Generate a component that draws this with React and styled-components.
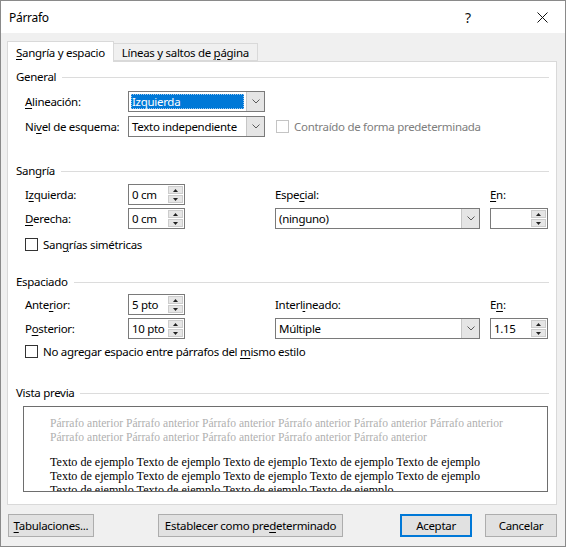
import React from 'react';
import styled, { createGlobalStyle } from 'styled-components';

const Global = createGlobalStyle`
  html, body { margin: 0; padding: 0; background: #fff; }
  body { font-family: "Noto Sans", "Segoe UI", sans-serif; font-size: 11.5px; letter-spacing: -0.3px; color: #000; }
  * { box-sizing: border-box; }
  u { text-decoration-thickness: 1px; text-underline-offset: 2px; }
`;

const Window = styled.div`
  width: 566px;
  height: 547px;
  border: 1px solid #8a8a8a;
  background: #f0f0f0;
  display: flex;
  flex-direction: column;
`;

const TitleBar = styled.div`
  height: 32px;
  background: #fff;
  display: flex;
  align-items: center;
  padding-left: 8px;
  flex-shrink: 0;
`;

const Title = styled.div`
  flex: 1;
  font-size: 12px;
`;

const TitleButton = styled.div`
  width: 46px;
  height: 32px;
  display: flex;
  align-items: center;
  justify-content: center;
  font-size: 14px;
  color: #111;
  margin-right: ${p => p.$mr || 0}px;
`;

const Body = styled.div`
  flex: 1;
  display: flex;
  flex-direction: column;
  padding: 8px 8px 0 6px;
`;

const Tabs = styled.div`
  display: flex;
  align-items: flex-end;
  height: 20px;
  position: relative;
  z-index: 1;
`;

const Tab = styled.div`
  height: ${p => (p.$active ? 21 : 18)}px;
  padding: 0 8px;
  display: flex;
  align-items: center;
  background: ${p => (p.$active ? '#fff' : '#f0f0f0')};
  border: 1px solid #d9d9d9;
  border-bottom: ${p => (p.$active ? 'none' : '1px solid #d9d9d9')};
  border-left: ${p => (p.$active ? '1px solid #d9d9d9' : 'none')};
  margin-bottom: ${p => (p.$active ? -1 : 0)}px;
`;

const Panel = styled.div`
  height: 444px;
  background: #fff;
  border: 1px solid #d9d9d9;
  padding: 7px 7px 0 8px;
  display: flex;
  flex-direction: column;
`;

const SectionHeader = styled.div`
  display: flex;
  align-items: center;
  height: 16px;
  line-height: 16px;
  margin-top: ${p => p.$mt || 0}px;
  &::after {
    content: '';
    flex: 1;
    border-top: 1px solid #dcdcdc;
    margin-left: 6px;
  }
`;

const SectionBody = styled.div`
  padding-left: 9px;
  margin-top: ${p => p.$mt || 0}px;
`;

const FlexRow = styled.div`
  display: flex;
  align-items: center;
  height: 21px;
  margin-top: ${p => p.$mt || 0}px;
`;

const Label = styled.div`
  width: ${p => p.$w || 103}px;
  flex-shrink: 0;
  color: ${p => (p.$disabled ? '#7d7d7d' : '#000')};
`;

const Grid = styled.div`
  display: grid;
  grid-template-columns: 103px 57px 90px 215px 58px;
  grid-auto-rows: 21px;
  row-gap: 3px;
  align-items: center;
`;

const Combo = styled.div`
  width: ${p => p.$w}px;
  height: 21px;
  border: 1px solid #7a7a7a;
  background: #fff;
  display: flex;
`;

const ComboValue = styled.div`
  flex: 1;
  display: flex;
  align-items: center;
  padding: 2px;
`;

const ComboText = styled.span`
  padding-left: 1px;
`;

const Selected = styled.span`
  flex: 1;
  align-self: stretch;
  display: flex;
  align-items: center;
  background: #0078d7;
  color: #fff;
  padding-left: 1px;
  outline: 1px dotted #9bc7ee;
  outline-offset: -1px;
`;

const ComboArrow = styled.div`
  width: 18px;
  background: #e5e5e5;
  border-left: 1px solid #c6c6c6;
  display: flex;
  align-items: center;
  justify-content: center;
`;

const Spin = styled.div`
  width: ${p => p.$w}px;
  height: 21px;
  border: 1px solid #7a7a7a;
  background: #fff;
  display: flex;
`;

const SpinText = styled.div`
  flex: 1;
  display: flex;
  align-items: center;
  padding-left: 3px;
`;

const SpinButtons = styled.div`
  width: 16px;
  display: flex;
  flex-direction: column;
  padding: 1px 1px 1px 0;
  gap: 1px;
`;

const SpinBtn = styled.div`
  flex: 1;
  background: #e6e6e6;
  border: 1px solid #cccccc;
  display: flex;
  align-items: center;
  justify-content: center;
`;

const CheckRow = styled.div`
  display: flex;
  align-items: center;
  height: 16px;
  margin-top: ${p => p.$mt || 0}px;
  margin-left: ${p => p.$ml || 0}px;
`;

const Box = styled.span`
  width: 13px;
  height: 13px;
  border: 1px solid ${p => (p.$disabled ? '#c4c4c4' : '#333')};
  background: #fff;
  margin-right: 5px;
  flex-shrink: 0;
`;

const CheckLabel = styled.span`
  color: ${p => (p.$disabled ? '#7d7d7d' : '#000')};
`;

const Preview = styled.div`
  margin: 5px 0 0 7px;
  width: 525px;
  height: 86px;
  border: 1px solid #6e6e6e;
  background: #fff;
  overflow: hidden;
  padding: 10px 0 0 26px;
  font-family: "Liberation Serif", "Times New Roman", serif;
  letter-spacing: 0;
  line-height: 14px;
`;

const PreviewPara = styled.div`
  color: ${p => (p.$muted ? '#b0b0b0' : '#000')};
  font-size: ${p => (p.$muted ? 11.6 : 12.1)}px;
  margin-top: ${p => p.$mt || 0}px;
  white-space: nowrap;
`;

const Footer = styled.div`
  display: flex;
  align-items: center;
  padding-top: 9px;
`;

const Button = styled.button`
  height: 23px;
  width: ${p => p.$w}px;
  margin-left: ${p => p.$ml || 0}px;
  font-family: inherit;
  font-size: 11.5px;
  letter-spacing: -0.3px;
  color: #000;
  background: #e1e1e1;
  border: 1px solid #adadad;
  padding: 0;
`;

const PrimaryButton = styled(Button)`
  border: 2px solid #0078d7;
`;

const Chevron = () => (
  <svg width="8" height="5" viewBox="0 0 8 5">
    <polyline points="0.5,0.5 4,4 7.5,0.5" fill="none" stroke="#5a5a5a" strokeWidth="1" />
  </svg>
);

const Tri = ({ down }) => (
  <svg width="5" height="3" viewBox="0 0 5 3">
    <polygon points={down ? '0,0 5,0 2.5,3' : '0,3 5,3 2.5,0'} fill="#222" />
  </svg>
);

const ComboBox = ({ w, children, selected }) => (
  <Combo $w={w}>
    <ComboValue>{selected ? <Selected>{children}</Selected> : <ComboText>{children}</ComboText>}</ComboValue>
    <ComboArrow><Chevron /></ComboArrow>
  </Combo>
);

const SpinBox = ({ w = 57, value }) => (
  <Spin $w={w}>
    <SpinText>{value}</SpinText>
    <SpinButtons>
      <SpinBtn><Tri /></SpinBtn>
      <SpinBtn><Tri down /></SpinBtn>
    </SpinButtons>
  </Spin>
);

const prev = 'Párrafo anterior ';
const sample = 'Texto de ejemplo ';

export default function App() {
  return (
    <>
      <Global />
      <Window>
        <TitleBar>
          <Title>Párrafo</Title>
          <TitleButton $mr={28}>?</TitleButton>
          <TitleButton>
            <svg width="11" height="11" viewBox="0 0 11 11">
              <path d="M0.5 0.5 L10.5 10.5 M10.5 0.5 L0.5 10.5" stroke="#111" strokeWidth="1" />
            </svg>
          </TitleButton>
        </TitleBar>
        <Body>
          <Tabs>
            <Tab $active><span><u>S</u>angría y espacio</span></Tab>
            <Tab><span>Líneas y saltos de <u>p</u>ágina</span></Tab>
          </Tabs>
          <Panel>
            <SectionHeader>General</SectionHeader>
            <SectionBody $mt={6}>
              <FlexRow>
                <Label><u>A</u>lineación:</Label>
                <ComboBox w={137} selected>Izquierda</ComboBox>
              </FlexRow>
              <FlexRow $mt={4}>
                <Label>Ni<u>v</u>el de esquema:</Label>
                <ComboBox w={137}>Texto independiente</ComboBox>
                <CheckRow $ml={11}>
                  <Box $disabled />
                  <CheckLabel $disabled>Contraído de forma predeterminada</CheckLabel>
                </CheckRow>
              </FlexRow>
            </SectionBody>

            <SectionHeader $mt={26}>Sangría</SectionHeader>
            <SectionBody $mt={5}>
              <Grid>
                <Label>I<u>z</u>quierda:</Label>
                <SpinBox value="0 cm" />
                <span />
                <Label>Espe<u>c</u>ial:</Label>
                <Label><u>E</u>n:</Label>
                <Label><u>D</u>erecha:</Label>
                <SpinBox value="0 cm" />
                <span />
                <ComboBox w={205}>(ninguno)</ComboBox>
                <SpinBox w={58} value="" />
              </Grid>
              <CheckRow $mt={7}>
                <Box />
                <CheckLabel>San<u>g</u>rías simétricas</CheckLabel>
              </CheckRow>
            </SectionBody>

            <SectionHeader $mt={22}>Espaciado</SectionHeader>
            <SectionBody $mt={4}>
              <Grid>
                <Label>Ante<u>r</u>ior:</Label>
                <SpinBox value="5 pto" />
                <span />
                <Label>Interl<u>i</u>neado:</Label>
                <Label>E<u>n</u>:</Label>
                <Label>P<u>o</u>sterior:</Label>
                <SpinBox value="10 pto" />
                <span />
                <ComboBox w={205}>Múltiple</ComboBox>
                <SpinBox w={58} value="1.15" />
              </Grid>
              <CheckRow $mt={4}>
                <Box />
                <CheckLabel>No agregar espacio entre párrafos del <u>m</u>ismo estilo</CheckLabel>
              </CheckRow>
            </SectionBody>

            <SectionHeader $mt={26}>Vista previa</SectionHeader>
            <Preview>
              <PreviewPara $muted>{prev.repeat(6).trim()}</PreviewPara>
              <PreviewPara $muted>{prev.repeat(5).trim()}</PreviewPara>
              <PreviewPara $mt={10}>{sample.repeat(5).trim()}</PreviewPara>
              <PreviewPara>{sample.repeat(5).trim()}</PreviewPara>
              <PreviewPara>{sample.repeat(4).trim()}</PreviewPara>
            </Preview>
          </Panel>
          <Footer>
            <Button $w={86} $ml={1}><u>T</u>abulaciones...</Button>
            <Button $w={185} $ml={64}>Establecer como pre<u>d</u>eterminado</Button>
            <PrimaryButton $w={72} $ml={57}>Aceptar</PrimaryButton>
            <Button $w={72} $ml={13}>Cancelar</Button>
          </Footer>
        </Body>
      </Window>
    </>
  );
}
